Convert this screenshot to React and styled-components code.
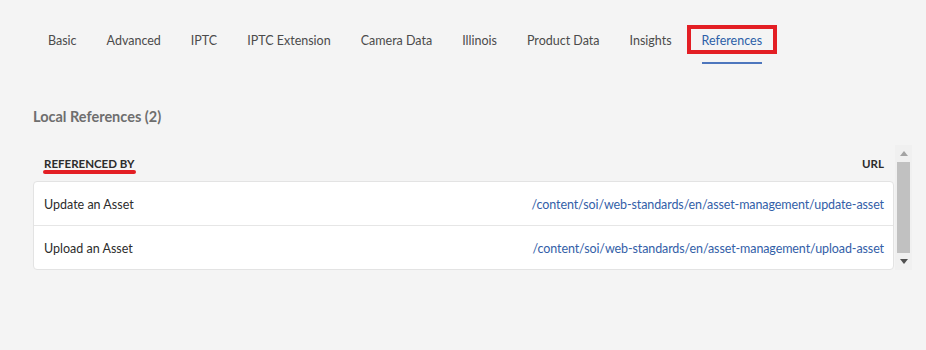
import React from 'react'
import styled, { createGlobalStyle } from 'styled-components'

const GlobalStyle = createGlobalStyle`
  html, body {
    margin: 0;
    padding: 0;
    background: #f4f4f4;
    font-family: Lato, "Liberation Sans", sans-serif;
  }
`

const Page = styled.div`
  width: 926px;
  height: 350px;
  background: #f4f4f4;
  overflow: hidden;
`

const TabBar = styled.nav`
  display: flex;
  gap: 30px;
  padding: 32px 0 0 48px;
`

const Tab = styled.div`
  font-size: 12.5px;
  line-height: 18px;
  color: ${(p) => (p.active ? '#2c5fa8' : '#4b4b4b')};
  text-decoration: ${(p) => (p.active ? 'underline' : 'none')};
  padding-bottom: 12px;
  border-bottom: 2px solid ${(p) => (p.active ? '#4d76bd' : 'transparent')};
  white-space: nowrap;
  cursor: pointer;
`

const TabLabel = styled.span`
  display: inline-block;
  padding: 3px 11px 0;
  margin: -3px -11px 0;
  outline: ${(p) => (p.highlighted ? '4px solid #e31e24' : 'none')};
`

const Content = styled.section`
  padding: 43px 14px 0 33px;
`

const Heading = styled.h2`
  margin: 0;
  font-size: 14.5px;
  line-height: 20px;
  font-weight: 700;
  color: #6e6e6e;
`

const Panel = styled.div`
  display: flex;
  margin-top: 18px;
  height: 125px;
`

const TableArea = styled.div`
  flex: 1;
  display: flex;
  flex-direction: column;
`

const HeaderRow = styled.div`
  display: flex;
  justify-content: space-between;
  align-items: flex-start;
  height: 37px;
  box-sizing: border-box;
  padding: 12px 10px 0 11px;
`

const ColumnTitle = styled.div`
  display: inline-flex;
  flex-direction: column;
  font-size: 11.5px;
  line-height: 14px;
  font-weight: 700;
  color: #2c2c2c;
  text-transform: uppercase;

  ${(p) =>
    p.marked &&
    `
    &::after {
      content: '';
      display: block;
      height: 4px;
      margin: -1px -1px 0 -1px;
      border-radius: 2px;
      background: #e31e24;
    }
  `}
`

const Card = styled.div`
  background: #fff;
  border: 1px solid #e3e3e3;
  border-radius: 4px;
`

const Row = styled.div`
  display: flex;
  justify-content: space-between;
  align-items: center;
  height: 43px;
  box-sizing: border-box;
  padding: 2px 9px 0 10px;
  font-size: 12.5px;
  & + & {
    border-top: 1px solid #e6e6e6;
    height: 44px;
  }
`

const Title = styled.span`
  color: #2c2c2c;
`

const Link = styled.a`
  color: #3360a8;
  text-decoration: none;
  letter-spacing: -0.1px;
`

const Scrollbar = styled.div`
  width: 17px;
  margin-left: 1px;
  display: flex;
  flex-direction: column;
  align-items: center;
  background: #f0f0f0;
`

const ArrowButton = styled.div`
  height: 17px;
  width: 17px;
  display: flex;
  align-items: center;
  justify-content: center;
`

const Thumb = styled.div`
  flex: 1;
  width: 13px;
  background: #c1c1c1;
`

const Arrow = ({ down, color }) => (
  <svg width="8" height="5" viewBox="0 0 8 5">
    <path d={down ? 'M0 0h8L4 5z' : 'M0 5h8L4 0z'} fill={color} />
  </svg>
)

const tabs = [
  'Basic',
  'Advanced',
  'IPTC',
  'IPTC Extension',
  'Camera Data',
  'Illinois',
  'Product Data',
  'Insights',
  'References',
]

const refs = [
  { title: 'Update an Asset', url: '/content/soi/web-standards/en/asset-management/update-asset' },
  { title: 'Upload an Asset', url: '/content/soi/web-standards/en/asset-management/upload-asset' },
]

const App = () => {
  return (
    <Page>
      <GlobalStyle />
      <TabBar>
        {tabs.map((t) => (
          <Tab key={t} active={t === 'References'}>
            <TabLabel highlighted={t === 'References'}>{t}</TabLabel>
          </Tab>
        ))}
      </TabBar>
      <Content>
        <Heading>Local References (2)</Heading>
        <Panel>
          <TableArea>
            <HeaderRow>
              <ColumnTitle marked>Referenced By</ColumnTitle>
              <ColumnTitle>URL</ColumnTitle>
            </HeaderRow>
            <Card>
              {refs.map((r) => (
                <Row key={r.url}>
                  <Title>{r.title}</Title>
                  <Link href="#">{r.url}</Link>
                </Row>
              ))}
            </Card>
          </TableArea>
          <Scrollbar>
            <ArrowButton>
              <Arrow color="#a3a3a3" />
            </ArrowButton>
            <Thumb />
            <ArrowButton>
              <Arrow down color="#505050" />
            </ArrowButton>
          </Scrollbar>
        </Panel>
      </Content>
    </Page>
  )
}

export default App
